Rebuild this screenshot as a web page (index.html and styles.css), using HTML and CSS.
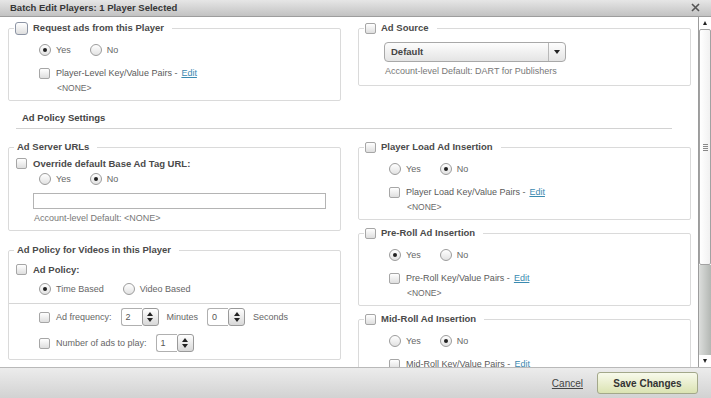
FILE: index.html
```html
<!DOCTYPE html>
<html lang="en">
<head>
    <meta charset="UTF-8">
    <title>Batch Edit Players</title>
    <link rel="stylesheet" href="styles.css">
</head>
<body>
<div class="dialog">
    <div class="titlebar">
        <span>Batch Edit Players: 1 Player Selected</span>
        <svg class="close" width="9" height="9" viewBox="0 0 9 9"><path d="M1 1L8 8M8 1L1 8" stroke="#555" stroke-width="1.6"/></svg>
    </div>
    <div class="main">
        <div class="content">
            <div class="cols">
                <fieldset class="box">
                    <legend><span class="cb big"></span>Request ads from this Player</legend>
                    <div class="row opts">
                        <span class="opt"><span class="rd on"></span>Yes</span>
                        <span class="opt"><span class="rd"></span>No</span>
                    </div>
                    <div class="row kv"><span class="cb"></span>Player-Level Key/Value Pairs - <a class="edit">Edit</a></div>
                    <div class="none">&lt;NONE&gt;</div>
                </fieldset>
                <fieldset class="box source">
                    <legend><span class="cb"></span>Ad Source</legend>
                    <div class="select"><span class="val">Default</span><span class="arr"><i class="tri-down"></i></span></div>
                    <div class="hint">Account-level Default: DART for Publishers</div>
                </fieldset>
            </div>

            <div class="section">Ad Policy Settings</div>

            <div class="cols">
                <div class="col left">
                    <fieldset class="box urls">
                        <legend class="plain">Ad Server URLs</legend>
                        <div class="row check"><span class="cb"></span><b>Override default Base Ad Tag URL:</b></div>
                        <div class="row opts">
                            <span class="opt"><span class="rd"></span>Yes</span>
                            <span class="opt"><span class="rd on"></span>No</span>
                        </div>
                        <div class="textbox"></div>
                        <div class="hint">Account-level Default: &lt;NONE&gt;</div>
                    </fieldset>
                    <fieldset class="box policy">
                        <legend class="plain">Ad Policy for Videos in this Player</legend>
                        <div class="row check"><span class="cb"></span><b>Ad Policy:</b></div>
                        <div class="row opts">
                            <span class="opt"><span class="rd on"></span>Time Based</span>
                            <span class="opt"><span class="rd"></span>Video Based</span>
                        </div>
                        <div class="rule"></div>
                        <div class="row spins">
                            <span class="cb"></span>Ad frequency:
                            <span class="spin"><span class="num">2</span><span class="btns"><i class="tri-up"></i><i class="tri-down"></i></span></span>
                            Minutes
                            <span class="spin"><span class="num">0</span><span class="btns"><i class="tri-up"></i><i class="tri-down"></i></span></span>
                            Seconds
                        </div>
                        <div class="row spins second">
                            <span class="cb"></span>Number of ads to play:
                            <span class="spin"><span class="num">1</span><span class="btns"><i class="tri-up"></i><i class="tri-down"></i></span></span>
                        </div>
                    </fieldset>
                </div>
                <div class="col right">
                    <fieldset class="box">
                        <legend><span class="cb"></span>Player Load Ad Insertion</legend>
                        <div class="row opts">
                            <span class="opt"><span class="rd"></span>Yes</span>
                            <span class="opt"><span class="rd on"></span>No</span>
                        </div>
                        <div class="row kv"><span class="cb"></span>Player Load Key/Value Pairs - <a class="edit">Edit</a></div>
                        <div class="none">&lt;NONE&gt;</div>
                    </fieldset>
                    <fieldset class="box">
                        <legend><span class="cb"></span>Pre-Roll Ad Insertion</legend>
                        <div class="row opts">
                            <span class="opt"><span class="rd on"></span>Yes</span>
                            <span class="opt"><span class="rd"></span>No</span>
                        </div>
                        <div class="row kv"><span class="cb"></span>Pre-Roll Key/Value Pairs - <a class="edit">Edit</a></div>
                        <div class="none">&lt;NONE&gt;</div>
                    </fieldset>
                    <fieldset class="box">
                        <legend><span class="cb"></span>Mid-Roll Ad Insertion</legend>
                        <div class="row opts">
                            <span class="opt"><span class="rd"></span>Yes</span>
                            <span class="opt"><span class="rd on"></span>No</span>
                        </div>
                        <div class="row kv"><span class="cb"></span>Mid-Roll Key/Value Pairs - <a class="edit">Edit</a></div>
                        <div class="none">&lt;NONE&gt;</div>
                    </fieldset>
                </div>
            </div>
        </div>
        <div class="scrollbar">
            <div class="sb-btn"><i class="tri-up"></i></div>
            <div class="sb-thumb"><span class="grip"></span></div>
            <div class="sb-track"></div>
            <div class="sb-btn"><i class="tri-down"></i></div>
        </div>
    </div>
    <div class="footer">
        <a class="cancel">Cancel</a>
        <button class="save">Save Changes</button>
    </div>
</div>
</body>
</html>
```

FILE: styles.css
```css
* {
    box-sizing: border-box;
}
body {
    margin: 0;
    font-family: "Liberation Sans", Arial, sans-serif;
    font-size: 9px;
    color: #5a5a5a;
    background: #fff;
}
.dialog {
    width: 711px;
    height: 398px;
    display: flex;
    flex-direction: column;
    overflow: hidden;
}
.titlebar {
    flex: none;
    height: 17px;
    display: flex;
    align-items: center;
    justify-content: space-between;
    padding: 0 11px 2px 10px;
    background: linear-gradient(#e6e6e6, #c2c2c2);
    border-bottom: 1px solid #9d9d9d;
    font-weight: bold;
    font-size: 9.5px;
    color: #363636;
}
.close {
    display: block;
}
.main {
    flex: 1;
    display: flex;
    min-height: 0;
}
.content {
    flex: 1;
    overflow: hidden;
    padding: 4px 7px 0 8px;
}
.cols {
    display: flex;
    gap: 17px;
    align-items: flex-start;
}
.cols > * {
    width: 333px;
    flex: none;
}
.col {
    display: flex;
    flex-direction: column;
}
.col.left {
    gap: 12px;
}
.col.right {
    gap: 6px;
}

/* fieldsets */
.box {
    margin: 0;
    padding: 0 0 7px 0;
    min-width: 0;
    border: 1px solid #dadada;
    border-radius: 2px;
}
.box legend {
    display: flex;
    align-items: center;
    gap: 5px;
    height: 14px;
    line-height: 14px;
    margin-left: 5px;
    padding: 0 8px 0 1px;
    font-weight: bold;
    font-size: 9.5px;
    color: #4a4a4a;
}
.box legend.plain {
    padding-left: 3px;
}
.row {
    display: flex;
    align-items: center;
    height: 16px;
    padding-left: 30px;
    white-space: nowrap;
}
.opts {
    margin-top: 7px;
}
.kv {
    margin-top: 7px;
}
.kv .cb {
    margin-right: 6px;
}
.none {
    margin-top: 2px;
    height: 10px;
    line-height: 10px;
    padding-left: 48px;
    font-size: 8.5px;
    color: #6a6a6a;
}
.opt {
    display: flex;
    align-items: center;
    margin-right: 19px;
    color: #666;
}
.opt .rd {
    margin-right: 5px;
}
.edit {
    color: #3a8ab0;
    text-decoration: underline;
    margin-left: 4px;
}
b {
    font-size: 9.5px;
    color: #4a4a4a;
}
.check {
    padding-left: 7px;
}
.check .cb {
    margin-right: 6px;
}
.hint {
    height: 10px;
    line-height: 10px;
    margin-top: 4px;
    padding-left: 25px;
    color: #777;
}

/* controls */
.cb {
    display: inline-block;
    flex: none;
    width: 11px;
    height: 11px;
    border: 1px solid #a6a6a6;
    border-radius: 2px;
    background: linear-gradient(#fff, #dedede);
}
.cb.big {
    width: 13px;
    height: 13px;
    border-color: #8c94a4;
    border-radius: 3px;
}
.rd {
    display: inline-flex;
    align-items: center;
    justify-content: center;
    flex: none;
    width: 12px;
    height: 12px;
    border: 1px solid #9c9c9c;
    border-radius: 50%;
    background: linear-gradient(#fff, #e2e2e2);
}
.rd.on::after {
    content: "";
    width: 4px;
    height: 4px;
    border-radius: 50%;
    background: #222;
}
.tri-up, .tri-down {
    display: block;
    width: 0;
    height: 0;
    border-left: 3px solid transparent;
    border-right: 3px solid transparent;
}
.tri-up {
    border-bottom: 4px solid #222;
}
.tri-down {
    border-top: 4px solid #222;
}

/* ad source select */
.source {
    padding-bottom: 9px;
}
.select {
    display: flex;
    width: 182px;
    height: 20px;
    margin: 7px 0 0 25px;
    border: 1px solid #a8a8a8;
    border-radius: 4px;
    background: linear-gradient(#fdfdfd, #e4e4e4);
}
.select .val {
    flex: 1;
    padding-left: 6px;
    line-height: 18px;
    font-weight: bold;
    font-size: 9.5px;
    color: #444;
}
.select .arr {
    width: 17px;
    display: flex;
    align-items: center;
    justify-content: center;
    border-left: 1px solid #b8b8b8;
}
.source .hint {
    padding-left: 26px;
}

/* ad server urls */
.urls .check {
    margin-top: 1px;
}
.urls .opts {
    margin-top: 0;
}
.textbox {
    height: 16px;
    width: 293px;
    margin: 6px 0 0 24px;
    border: 1px solid #b4b4b4;
    background: #fff;
}

/* ad policy */
.policy .check {
    margin-top: 4px;
}
.policy .opts {
    margin-top: 4px;
}
.rule {
    margin-top: 6px;
    border-top: 1px solid #d6d6d6;
}
.spins {
    height: 18px;
    margin-top: 4px;
    color: #666;
}
.spins.second {
    margin-top: 8px;
}
.spins .cb {
    margin-right: 6px;
}
.spin {
    display: flex;
    height: 18px;
    margin: 0 8px 0 9px;
}
.spin .num {
    width: 21px;
    padding-left: 4px;
    line-height: 16px;
    border: 1px solid #b0b0b0;
    border-right: none;
    border-radius: 3px 0 0 3px;
    background: #fff;
    color: #555;
}
.spin .btns {
    width: 17px;
    display: flex;
    flex-direction: column;
    align-items: center;
    justify-content: space-evenly;
    border: 1px solid #9a9a9a;
    border-radius: 3px;
    background: linear-gradient(#fff, #d8d8d8);
}

/* heading */
.section {
    margin: 11px 19px 0 8px;
    padding: 0 0 4px 6px;
    line-height: 12px;
    border-bottom: 1px solid #d2d2d2;
    font-weight: bold;
    font-size: 9.5px;
    color: #444;
}
.section + .cols {
    margin-top: 11px;
}

/* scrollbar */
.scrollbar {
    flex: none;
    width: 13px;
    display: flex;
    flex-direction: column;
    border-left: 1px solid #9c9c9c;
    background: #fff;
}
.sb-btn {
    height: 12px;
    display: flex;
    align-items: center;
    justify-content: center;
}
.sb-btn .tri-up, .sb-btn .tri-down {
    border-left-width: 2.5px;
    border-right-width: 2.5px;
}
.sb-thumb {
    height: 236px;
    display: flex;
    align-items: center;
    justify-content: center;
    border: 1px solid #a2a2a2;
    border-radius: 2px;
    background: linear-gradient(90deg, #fff, #f1f1f1);
}
.grip {
    width: 5px;
    height: 7px;
    background: repeating-linear-gradient(#888 0 1px, transparent 1px 2px);
}
.sb-track {
    flex: 1;
    background: linear-gradient(90deg, #dcdedc, #b3b7b3);
}

/* footer */
.footer {
    flex: none;
    height: 31px;
    display: flex;
    align-items: center;
    justify-content: flex-end;
    gap: 14px;
    padding: 0 13px 0 0;
    border-top: 1px solid #b9b9b9;
    background: linear-gradient(#ececec, #d2d2d2);
}
.cancel {
    font-size: 10px;
    color: #444;
    text-decoration: underline;
}
.save {
    width: 101px;
    height: 22px;
    margin: 0;
    padding: 0;
    border: 1px solid #a3a88a;
    border-radius: 3px;
    background: linear-gradient(#f8faec, #dbe3b2);
    font-family: "Liberation Sans", Arial, sans-serif;
    font-weight: bold;
    font-size: 10px;
    color: #333;
}
```
